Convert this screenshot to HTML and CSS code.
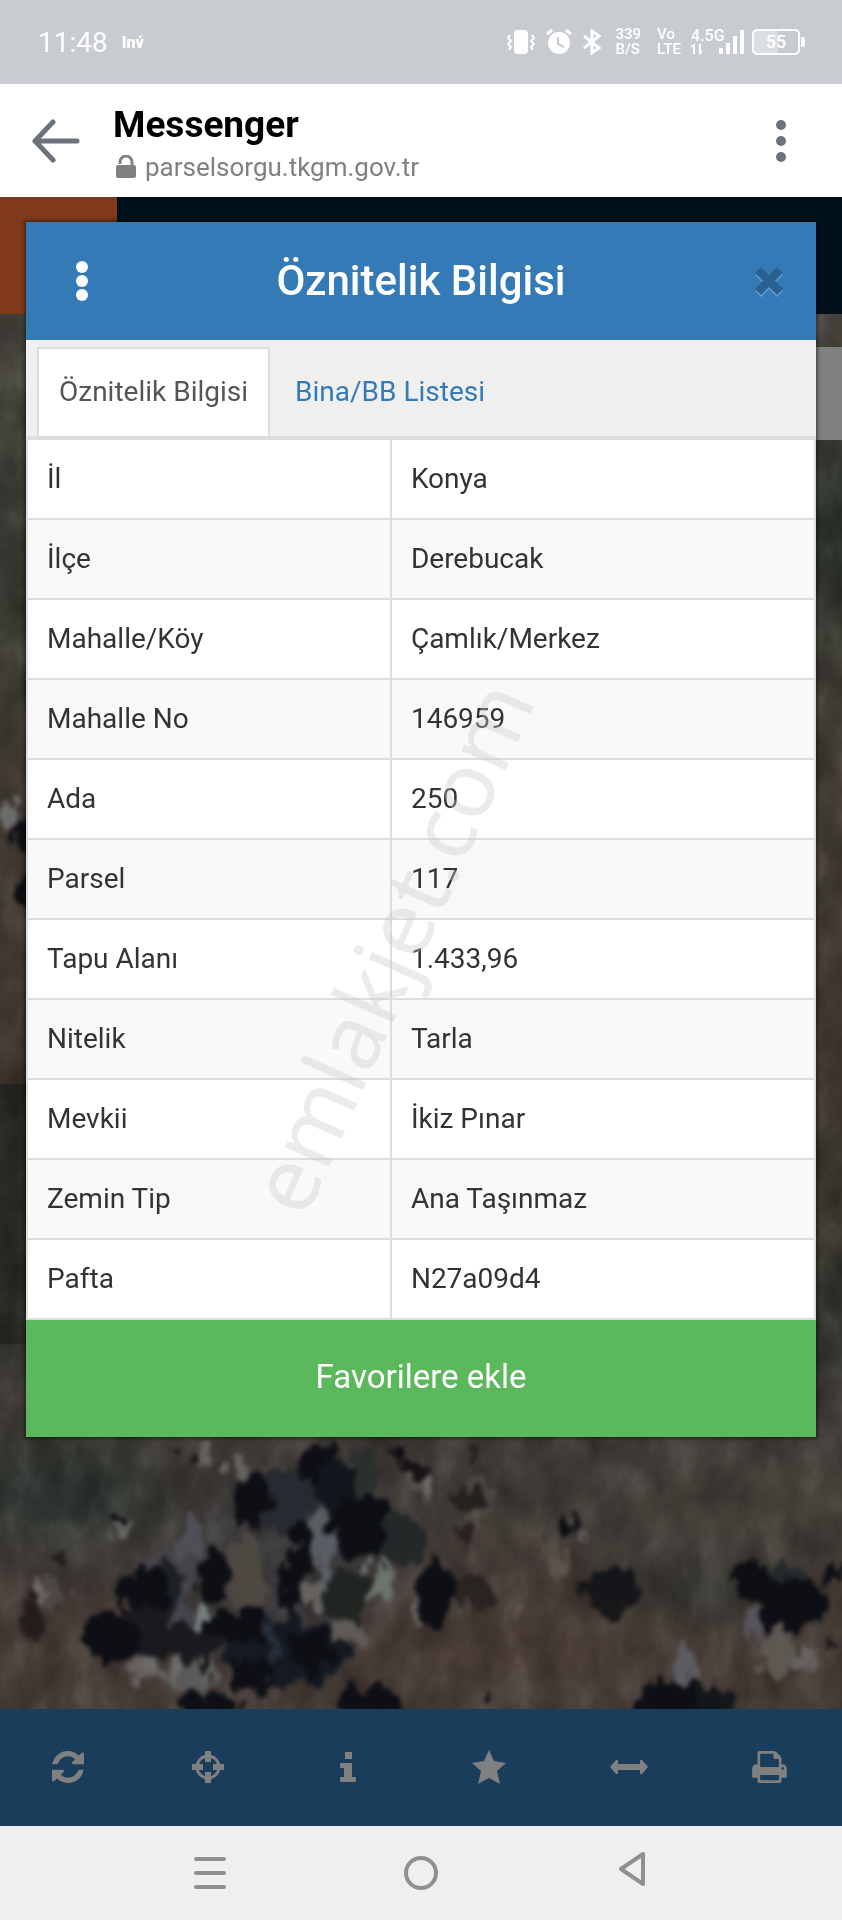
FILE: index.html
```html
<!DOCTYPE html>
<html lang="tr">
<head>
    <meta charset="UTF-8">
    <meta name="viewport" content="width=device-width, initial-scale=1.0">
    <title>Öznitelik Bilgisi</title>
    <link rel="stylesheet" href="styles.css">
</head>
<body>

<div class="status-bar">
    <span class="clock">11:48</span>
    <span class="carrier">Inv́</span>
    <div class="status-icons">
        <svg class="icon-vibrate" viewBox="0 0 30 26" width="30" height="26">
            <rect x="8" y="1" width="14" height="24" rx="4" fill="#fff"/>
            <path d="M4 6L2 9l3 3-3 3 3 3-2 3M26 6l2 3-3 3 3 3-3 3 2 3" fill="none" stroke="#fff" stroke-width="2"/>
        </svg>
        <svg class="icon-alarm" viewBox="0 0 26 26" width="26" height="26">
            <circle cx="13" cy="14" r="11" fill="#fff"/>
            <path d="M1 5l5-4M25 5l-5-4" stroke="#fff" stroke-width="3"/>
            <path d="M12 8v7l6 3" fill="none" stroke="#c8ccd1" stroke-width="2"/>
        </svg>
        <svg class="icon-bluetooth" viewBox="0 0 20 26" width="20" height="26">
            <path d="M2 7l15 12-7 5V2l7 5L2 19" fill="none" stroke="#fff" stroke-width="3"/>
        </svg>
        <span class="stacked speed">339<br>B/S</span>
        <span class="stacked volte">Vo<br>LTE</span>
        <div class="signal">
            <span class="network">4.5G</span>
            <svg viewBox="0 0 54 26" width="54" height="26">
                <path d="M3 25v-9l-3 2M9 15v9l2-2" fill="none" stroke="#fff" stroke-width="2"/>
                <path d="M30 25v-6M37 25V14M44 25V7M51 25V1" stroke="#fff" stroke-width="4"/>
            </svg>
        </div>
        <div class="battery"><span class="battery-body">55</span><span class="battery-tip"></span></div>
    </div>
</div>

<header class="app-bar">
    <button class="plain-button" aria-label="Geri">
        <svg viewBox="0 0 48 44" width="48" height="44">
            <path d="M21 3L3 22l18 19M3 22h42" fill="none" stroke="#6c737c" stroke-width="5" stroke-linecap="round" stroke-linejoin="round"/>
        </svg>
    </button>
    <div class="app-title">
        <h1>Messenger</h1>
        <p class="address">
            <svg viewBox="0 0 20 24" width="20" height="24">
                <path d="M4 9V7a6 6 0 0 1 12 0v3" fill="none" stroke="#808080" stroke-width="3"/>
                <rect y="10" width="20" height="13" rx="2" fill="#808080"/>
            </svg>
            parselsorgu.tkgm.gov.tr
        </p>
    </div>
    <button class="plain-button" aria-label="Menü">
        <svg viewBox="0 0 10 44" width="10" height="44" fill="#6c737c">
            <circle cx="5" cy="6" r="5"/><circle cx="5" cy="22" r="5"/><circle cx="5" cy="38" r="5"/>
        </svg>
    </button>
</header>

<main class="page">
    <div class="site">
        <div class="site-header"><div class="site-logo"></div></div>
        <div class="map">
            <svg class="map-image" viewBox="0 0 842 1395" preserveAspectRatio="xMidYMin slice">
                <defs>
                    <linearGradient id="ground" x1="0" y1="0" x2="0" y2="1">
                        <stop offset="0" stop-color="#49463f"/>
                        <stop offset=".16" stop-color="#383b33"/>
                        <stop offset=".33" stop-color="#413b34"/>
                        <stop offset=".55" stop-color="#40382f"/>
                        <stop offset=".7" stop-color="#34342d"/>
                        <stop offset=".8" stop-color="#403c37"/>
                        <stop offset="1" stop-color="#483d38"/>
                    </linearGradient>
                    <filter id="soft" x="-20%" y="-20%" width="140%" height="140%" color-interpolation-filters="sRGB">
                        <feGaussianBlur stdDeviation="28"/>
                    </filter>
                    <filter id="rough" x="-5%" y="-5%" width="110%" height="110%" color-interpolation-filters="sRGB">
                        <feTurbulence type="fractalNoise" baseFrequency=".07 .04" numOctaves="3" seed="4" result="n"/>
                        <feDisplacementMap in="SourceGraphic" in2="n" scale="34" xChannelSelector="R" yChannelSelector="G"/>
                        <feGaussianBlur stdDeviation="2.2"/>
                    </filter>
                    <filter id="grain" x="0" y="0" width="100%" height="100%" color-interpolation-filters="sRGB">
                        <feTurbulence type="fractalNoise" baseFrequency=".03 .02" numOctaves="4" seed="9"/>
                        <feColorMatrix values="1.4 0 0 0 -.25  1.4 0 0 0 -.25  1.4 0 0 0 -.25  0 0 0 0 .3"/>
                    </filter>
                </defs>
                <rect width="842" height="1395" fill="url(#ground)"/>
                <rect y="770" width="60" height="260" fill="#2a2b25"/>
                <g filter="url(#soft)">
                    <ellipse cx="60" cy="1180" rx="100" ry="45" fill="#2d3531"/>
                    <ellipse cx="690" cy="1280" rx="90" ry="28" fill="#343731"/>
                    <ellipse cx="540" cy="1330" rx="190" ry="40" fill="#4b3e38"/>
                    <ellipse cx="30" cy="1340" rx="60" ry="40" fill="#493c37"/>
                    <ellipse cx="760" cy="1180" rx="120" ry="40" fill="#49433d"/>
                    <ellipse cx="270" cy="1250" rx="110" ry="90" fill="#3b3a3a"/>
                    <ellipse cx="830" cy="210" rx="25" ry="80" fill="#242a25"/>
                </g>
                <rect class="map-grain" width="842" height="1395" filter="url(#grain)"/>
                <!-- trees and rocks -->
                <g filter="url(#rough)">
                    <g fill="#66635f">
                        <ellipse cx="202" cy="1146" rx="7" ry="12"/>
                        <ellipse cx="236" cy="1152" rx="9" ry="8"/>
                        <ellipse cx="192" cy="1226" rx="12" ry="24" fill="#514f56"/>
                        <ellipse cx="168" cy="1260" rx="30" ry="24" fill="#464449"/>
                        <ellipse cx="247" cy="1260" rx="22" ry="38" fill="#4d4842"/>
                        <ellipse cx="322" cy="1230" rx="10" ry="42" fill="#595d64"/>
                        <ellipse cx="309" cy="1282" rx="14" ry="14"/>
                        <ellipse cx="380" cy="1262" rx="12" ry="20" fill="#6b736e"/>
                        <ellipse cx="205" cy="1300" rx="8" ry="12" fill="#7a8588"/>
                        <ellipse cx="145" cy="1358" rx="22" ry="13"/>
                        <ellipse cx="192" cy="1362" rx="26" ry="18" fill="#5c5a58"/>
                        <ellipse cx="352" cy="1318" rx="14" ry="14" fill="#5f5c58"/>
                        <ellipse cx="425" cy="1170" rx="14" ry="14" fill="#575451"/>
                        <ellipse cx="478" cy="1190" rx="14" ry="26" fill="#4c4740"/>
                        <ellipse cx="117" cy="1216" rx="10" ry="9"/>
                        <ellipse cx="52" cy="1280" rx="18" ry="12" fill="#4d4944"/>
                        <ellipse cx="580" cy="1222" rx="4" ry="10"/>
                        <ellipse cx="560" cy="1250" rx="4" ry="12" fill="#5f544b"/>
                        <ellipse cx="520" cy="1300" rx="4" ry="13" fill="#665950"/>
                        <ellipse cx="778" cy="1340" rx="20" ry="22" fill="#5d5851"/>
                        <ellipse cx="756" cy="1306" rx="9" ry="18" fill="#56555a"/>
                        <ellipse cx="806" cy="1346" rx="10" ry="14"/>
                        <ellipse cx="684" cy="1352" rx="9" ry="26" fill="#5d5c60"/>
                        <ellipse cx="420" cy="1294" rx="12" ry="12"/>
                    </g>
                    <g fill="#0d0f14">
                        <ellipse cx="192" cy="1142" rx="6" ry="9"/>
                        <ellipse cx="288" cy="1188" rx="26" ry="32" fill="#272a30"/>
                        <ellipse cx="366" cy="1160" rx="16" ry="26" fill="#2a302e"/>
                        <ellipse cx="252" cy="1188" rx="18" ry="29"/>
                        <ellipse cx="318" cy="1152" rx="20" ry="22"/>
                        <ellipse cx="334" cy="1172" rx="20" ry="28" fill="#13171d"/>
                        <ellipse cx="398" cy="1226" rx="28" ry="26" fill="#232829"/>
                        <ellipse cx="360" cy="1212" rx="28" ry="32"/>
                        <ellipse cx="395" cy="1138" rx="9" ry="11"/>
                        <ellipse cx="416" cy="1156" rx="13" ry="9" fill="#1a1215"/>
                        <ellipse cx="471" cy="1140" rx="8" ry="11" fill="#272220"/>
                        <ellipse cx="466" cy="1184" rx="18" ry="9" fill="#24221f"/>
                        <ellipse cx="467" cy="1222" rx="7" ry="9" fill="#2a2220"/>
                        <ellipse cx="303" cy="1232" rx="10" ry="24"/>
                        <ellipse cx="292" cy="1270" rx="9" ry="34"/>
                        <ellipse cx="213" cy="1262" rx="15" ry="25"/>
                        <ellipse cx="172" cy="1276" rx="13" ry="28" fill="#1e2027"/>
                        <ellipse cx="143" cy="1278" rx="24" ry="28"/>
                        <ellipse cx="346" cy="1282" rx="30" ry="26" fill="#212522"/>
                        <ellipse cx="474" cy="1278" rx="20" ry="14" fill="#292422"/>
                        <ellipse cx="435" cy="1282" rx="20" ry="30"/>
                        <ellipse cx="150" cy="1318" rx="22" ry="26" fill="#181a20"/>
                        <ellipse cx="110" cy="1322" rx="28" ry="26"/>
                        <ellipse cx="192" cy="1330" rx="28" ry="22" fill="#191a1d"/>
                        <ellipse cx="285" cy="1338" rx="60" ry="36" fill="#151a22"/>
                        <ellipse cx="240" cy="1312" rx="30" ry="18"/>
                        <ellipse cx="310" cy="1336" rx="22" ry="22"/>
                        <ellipse cx="252" cy="1362" rx="24" ry="16"/>
                        <ellipse cx="210" cy="1392" rx="34" ry="13"/>
                        <ellipse cx="372" cy="1388" rx="34" ry="15"/>
                        <ellipse cx="32" cy="1302" rx="9" ry="26" fill="#231e1d"/>
                        <ellipse cx="62" cy="1242" rx="7" ry="9" fill="#231f1d"/>
                        <ellipse cx="116" cy="1206" rx="5" ry="6"/>
                        <ellipse cx="571" cy="1210" rx="5" ry="10"/>
                        <ellipse cx="610" cy="1274" rx="27" ry="20" fill="#15161a"/>
                        <ellipse cx="614" cy="1296" rx="13" ry="18" fill="#18171a"/>
                        <ellipse cx="785" cy="1268" rx="20" ry="18" fill="#252a2c"/>
                        <ellipse cx="752" cy="1264" rx="20" ry="17"/>
                        <ellipse cx="790" cy="1290" rx="34" ry="28"/>
                        <ellipse cx="836" cy="1258" rx="10" ry="10"/>
                        <ellipse cx="830" cy="1330" rx="8" ry="10" fill="#221f1c"/>
                        <ellipse cx="706" cy="1388" rx="28" ry="18" fill="#13171a"/>
                        <ellipse cx="665" cy="1388" rx="32" ry="19"/>
                        <ellipse cx="487" cy="1384" rx="4" ry="5"/>
                        <ellipse cx="26" cy="518" rx="14" ry="18"/>
                        <ellipse cx="28" cy="580" rx="10" ry="14"/>
                    </g>
                    <!-- bright stones between the trees -->
                    <g fill="#6d6c6b">
                        <ellipse cx="205" cy="1302" rx="6" ry="12" fill="#76807f"/>
                        <ellipse cx="380" cy="1272" rx="8" ry="18" fill="#6c746e"/>
                        <ellipse cx="322" cy="1262" rx="6" ry="20" fill="#5d6068"/>
                        <ellipse cx="184" cy="1290" rx="5" ry="22" fill="#454650"/>
                        <ellipse cx="150" cy="1350" rx="6" ry="12"/>
                        <ellipse cx="176" cy="1356" rx="5" ry="14"/>
                        <ellipse cx="206" cy="1352" rx="5" ry="12"/>
                        <ellipse cx="270" cy="1325" rx="4" ry="26" fill="#27303e"/>
                        <ellipse cx="428" cy="1170" rx="5" ry="10"/>
                        <ellipse cx="478" cy="1206" rx="4" ry="16" fill="#59544d"/>
                        <ellipse cx="40" cy="1280" rx="4" ry="9"/>
                        <ellipse cx="8" cy="498" rx="10" ry="16"/>
                    </g>
                </g>
                <rect x="790" y="33" width="60" height="93" fill="#808080"/>
            </svg>
        </div>
        <nav class="toolbar">
            <button aria-label="Yenile">
                <svg viewBox="0 0 1536 1536" width="32" height="32"><path d="M1511 928q0 5-1 7-64 268-268 434.500T764 1536q-146 0-282.500-55T238 1324l-129 129q-19 19-45 19t-45-19-19-45V960q0-26 19-45t45-19h448q26 0 45 19t19 45-19 45l-137 137q71 66 161 102t187 36q134 0 250-65t186-179q11-17 53-117 8-23 30-23h192q13 0 22.500 9.500t9.500 22.500zm25-800v448q0 26-19 45t-45 19h-448q-26 0-45-19t-19-45 19-45l138-138Q969 256 768 256q-134 0-250 65T332 500q-11 17-53 117-8 23-30 23H50q-13 0-22.500-9.500T18 608v-7q65-268 270-434.500T768 0q146 0 284 55.500T1297 212l130-129q19-19 45-19t45 19 19 45z"/></svg>
            </button>
            <button aria-label="Konum">
                <svg viewBox="0 0 32 32" width="32" height="32">
                    <circle cx="16" cy="16" r="11" fill="none" stroke="#808080" stroke-width="3"/>
                    <path d="M13 0h6v11h-6zM13 21h6v11h-6zM0 13h11v6H0zM21 13h11v6H21z"/>
                </svg>
            </button>
            <button aria-label="Bilgi">
                <svg viewBox="0 0 16 30" width="16" height="30"><path d="M5 0h7v7H5zM1 11h11v14h3q1 0 1 1v3q0 1-1 1H1q-1 0-1-1v-3q0-1 1-1h3v-9H1q-1 0-1-1v-3q0-1 1-1z"/></svg>
            </button>
            <button aria-label="Favoriler">
                <svg viewBox="0 0 34 34" width="34" height="34"><path d="M17 0l5 11 12 2-9 8 3 13-11-6-11 6 3-13-9-8 12-2z"/></svg>
            </button>
            <button aria-label="Ölçüm">
                <svg viewBox="0 0 38 14" width="38" height="14"><path d="M0 7l6-7h2v4h22V0h2l6 7-6 7h-2v-4H8v4H6z"/></svg>
            </button>
            <button aria-label="Yazdır">
                <svg viewBox="0 128 1664 1536" width="35" height="32"><path d="M384 1536h896v-256H384v256zm0-640h896V512h-160q-40 0-68-28t-28-68V256H384v640zm1152 64q0-26-19-45t-45-19-45 19-19 45 19 45 45 19 45-19 19-45zm128 0v416q0 13-9.500 22.500t-22.500 9.500h-224v160q0 40-28 68t-68 28H352q-40 0-68-28t-28-68v-160H32q-13 0-22.500-9.500T0 1376V960q0-79 56.500-135.500T192 768h64V224q0-40 28-68t68-28h672q40 0 88 20t76 48l152 152q28 28 48 76t20 88v256h64q79 0 135.500 56.500T1664 960z"/></svg>
            </button>
        </nav>
    </div>

    <section class="modal">
        <div class="modal-header">
            <button class="plain-button" aria-label="Seçenekler">
                <svg viewBox="0 0 12 40" width="12" height="40" fill="#fff">
                    <circle cx="6" cy="6" r="6"/><circle cx="6" cy="20" r="6"/><circle cx="6" cy="34" r="6"/>
                </svg>
            </button>
            <h2>Öznitelik Bilgisi</h2>
            <button class="plain-button" aria-label="Kapat">
                <svg viewBox="0 0 30 32" width="30" height="32">
                    <path d="M7 4l8 8 8-8 6 6-8 8 8 8-6 6-8-8-8 8-6-6 8-8-8-8z" fill="#62a0d2"/>
                    <path d="M7 2l8 8 8-8 6 6-8 8 8 8-6 6-8-8-8 8-6-6 8-8-8-8z" fill="#296192"/>
                </svg>
            </button>
        </div>
        <div class="tabs">
            <a class="tab active" href="#">Öznitelik Bilgisi</a>
            <a class="tab" href="#">Bina/BB Listesi</a>
        </div>
        <table class="attributes">
            <tr><th scope="row">İl</th><td>Konya</td></tr>
            <tr><th scope="row">İlçe</th><td>Derebucak</td></tr>
            <tr><th scope="row">Mahalle/Köy</th><td>Çamlık/Merkez</td></tr>
            <tr><th scope="row">Mahalle No</th><td>146959</td></tr>
            <tr><th scope="row">Ada</th><td>250</td></tr>
            <tr><th scope="row">Parsel</th><td>117</td></tr>
            <tr><th scope="row">Tapu Alanı</th><td>1.433,96</td></tr>
            <tr><th scope="row">Nitelik</th><td>Tarla</td></tr>
            <tr><th scope="row">Mevkii</th><td>İkiz Pınar</td></tr>
            <tr><th scope="row">Zemin Tip</th><td>Ana Taşınmaz</td></tr>
            <tr><th scope="row">Pafta</th><td>N27a09d4</td></tr>
        </table>
        <button class="favorite-button">Favorilere ekle</button>
    </section>
</main>

<nav class="system-nav">
    <button class="plain-button" aria-label="Son uygulamalar">
        <svg viewBox="0 0 32 34" width="32" height="34"><path d="M2 3h28M2 17h28M2 31h28" stroke="#909090" stroke-width="4" stroke-linecap="round"/></svg>
    </button>
    <button class="plain-button" aria-label="Ana ekran">
        <svg viewBox="0 0 34 34" width="34" height="34"><circle cx="17" cy="17" r="15" fill="none" stroke="#909090" stroke-width="4"/></svg>
    </button>
    <button class="plain-button back" aria-label="Geri">
        <svg viewBox="0 0 28 36" width="28" height="36"><path d="M25 3v30L3 18z" fill="none" stroke="#909090" stroke-width="4" stroke-linejoin="round"/></svg>
    </button>
</nav>

<div class="watermark">emlakjet.com</div>

</body>
</html>
```

FILE: styles.css
```css
* {
    box-sizing: border-box;
}
body {
    font-family: Roboto, Arial, sans-serif;
    background-color: #efefef;
    display: flex;
    flex-direction: column;
    min-height: 100vh;
    margin: 0;
    position: relative;
    overflow-x: hidden;
}
h1, h2, p {
    margin: 0;
}
svg {
    display: block;
}
button {
    font-family: inherit;
    border: none;
    cursor: pointer;
}
.plain-button {
    background: none;
    padding: 0;
}

/* Phone status bar */
.status-bar {
    display: flex;
    align-items: center;
    height: 84px;
    padding: 0 37px 0 38px;
    background-color: #c8ccd1;
    color: #fff;
}
.clock {
    font-size: 28px;
}
.carrier {
    margin-left: 14px;
    font-size: 16px;
    font-weight: 900;
}
.status-icons {
    display: flex;
    align-items: center;
    gap: 10px;
    margin-left: auto;
}
.stacked {
    font-size: 15px;
    line-height: 15px;
    font-weight: 500;
}
.speed {
    margin: 0 6px 0 4px;
}
.signal {
    position: relative;
    margin-right: -3px;
}
.network {
    position: absolute;
    top: -3px;
    left: 0;
    font-size: 16px;
    font-weight: 500;
}
.battery {
    display: flex;
    align-items: center;
    gap: 1px;
}
.battery-body {
    width: 48px;
    border: 2px solid #fff;
    border-radius: 5px;
    background: linear-gradient(to right, #dcdfe2 55%, transparent 55%);
    font-size: 18px;
    line-height: 22px;
    font-weight: 500;
    text-align: center;
}
.battery-tip {
    width: 4px;
    height: 10px;
    border-radius: 0 3px 3px 0;
    background-color: #fff;
}

/* In-app browser bar */
.app-bar {
    display: flex;
    align-items: center;
    height: 113px;
    padding: 0 56px 0 32px;
    background-color: #fff;
}
.app-title {
    flex: 1;
    margin-left: 33px;
    padding-top: 10px;
}
.app-title h1 {
    font-size: 37px;
    line-height: 42px;
    font-weight: 700;
    color: #000;
}
.address {
    display: flex;
    align-items: center;
    gap: 9px;
    padding-left: 3px;
    font-size: 26px;
    line-height: 42px;
    color: #808080;
}

/* The site lies behind, the modal shares its grid cell */
.page {
    display: grid;
    grid-template-columns: minmax(0, 1fr);
    flex: 1;
}
.site,
.modal {
    grid-area: 1 / 1;
}
.site {
    display: flex;
    flex-direction: column;
}
.site-header {
    display: flex;
    height: 117px;
    background-color: #00111c;
}
.site-logo {
    width: 117px;
    background-color: #80391b;
}
.map {
    position: relative;
    flex: 1;
    overflow: hidden;
}
.map-image {
    position: absolute;
    width: 100%;
    height: 100%;
}
.map-grain {
    mix-blend-mode: soft-light;
}
.toolbar {
    display: grid;
    grid-template-columns: repeat(6, 1fr);
    height: 117px;
    background-color: #1b3d5c;
}
.toolbar button {
    display: flex;
    align-items: center;
    justify-content: center;
    padding: 0 5px 2px 0;
    background: none;
    fill: #808080;
}

/* Modal */
.modal {
    align-self: start;
    z-index: 1;
    margin: 25px 26px 389px;
    background-color: #fff;
    box-shadow: 0 0 3px 2px rgba(0, 0, 0, 0.4);
}
.modal-header {
    display: flex;
    align-items: center;
    justify-content: space-between;
    height: 118px;
    padding: 0 32px 0 50px;
    background-color: #337ab7;
    color: #fff;
}
.modal-header h2 {
    font-size: 42px;
    line-height: 50px;
    font-weight: 500;
}
.tabs {
    display: flex;
    align-items: flex-end;
    gap: 3px;
    height: 100px;
    padding-left: 11px;
    background-color: #efefef;
    border-bottom: 4px solid #ddd;
}
.tab {
    height: 89px;
    padding: 0 20px;
    border: 2px solid transparent;
    border-bottom: none;
    font-size: 28px;
    line-height: 86px;
    color: #337ab7;
    text-decoration: none;
}
.tab.active {
    background-color: #fff;
    border-color: #ddd;
    color: #555;
}
.attributes {
    width: 100%;
    table-layout: fixed;
    border-spacing: 0;
    border: 2px solid #ddd;
    border-width: 0 2px;
    color: #333;
    font-size: 28px;
    line-height: 40px;
}
.attributes th,
.attributes td {
    height: 80px;
    padding: 0 19px;
    border-bottom: 2px solid #ddd;
    font-weight: 400;
    text-align: left;
}
.attributes th {
    width: 46.3%;
    border-right: 2px solid #ddd;
}
.attributes tr:nth-child(even) {
    background-color: #f9f9f9;
}
.favorite-button {
    display: block;
    width: 100%;
    height: 117px;
    padding: 0 0 4px;
    background-color: #5cb85c;
    color: #fff;
    font-size: 33px;
}

/* Android navigation */
.system-nav {
    display: grid;
    grid-template-columns: repeat(3, 1fr);
    justify-items: center;
    align-items: center;
    height: 94px;
    padding: 0 105px;
    background-color: #efefef;
}
.back {
    padding-bottom: 8px;
}

.watermark {
    position: absolute;
    z-index: 2;
    top: calc(50% - 14px);
    left: calc(50% - 32px);
    transform: translate(-50%, -50%) rotate(-66deg);
    font-family: "Noto Sans", sans-serif;
    font-size: 90px;
    color: rgba(200, 200, 200, 0.36);
    pointer-events: none;
}
```
